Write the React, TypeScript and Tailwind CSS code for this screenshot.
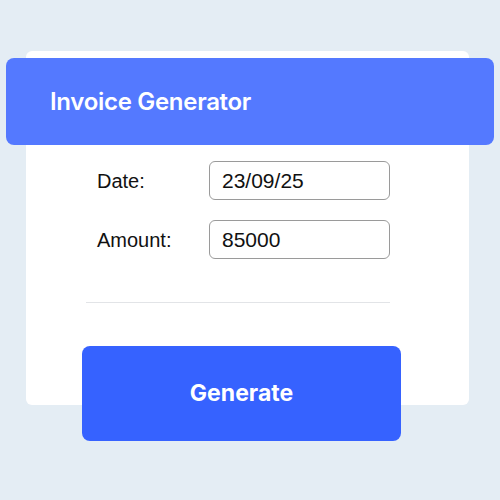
const FIELDS = [
  { label: "Date:", value: "23/09/25" },
  { label: "Amount:", value: "85000" },
];

export default function App() {
  return (
    <div className="h-[500px] w-[500px] overflow-hidden bg-[#e4edf4] pl-[26px] pt-[51px]">
      <div className="flex w-[443px] flex-col rounded-[6px] bg-white pt-[7px]">
        <div className="-ml-[20px] -mr-[25px] flex h-[87px] items-center rounded-[8px] bg-[#5479ff] pl-[44px]">
          <h1 className="font-['Inter',sans-serif] text-[24px] font-semibold tracking-[-0.3px] text-white">
            Invoice Generator
          </h1>
        </div>

        <div className="mt-[16px] flex flex-col gap-[20px]">
          {FIELDS.map((f) => (
            <div key={f.label} className="flex items-center pl-[71px]">
              <span className="w-[112px] font-['Liberation_Sans',Arial,sans-serif] text-[20px] text-[#111]">
                {f.label}
              </span>
              <div className="flex h-[39px] w-[181px] items-center rounded-[6px] border border-[#9a9a9a] pl-[12px] font-['Liberation_Sans',Arial,sans-serif] text-[21px] text-[#111]">
                {f.value}
              </div>
            </div>
          ))}
        </div>

        <div className="ml-[60px] mt-[43px] h-px w-[304px] bg-[#e2e4e7]" />

        <button className="-mb-[36px] ml-[56px] mt-[43px] flex h-[95px] w-[319px] items-center justify-center rounded-[8px] bg-[#3662ff] font-['Inter',sans-serif] text-[23px] font-bold text-white">
          Generate
        </button>
      </div>
    </div>
  );
}
